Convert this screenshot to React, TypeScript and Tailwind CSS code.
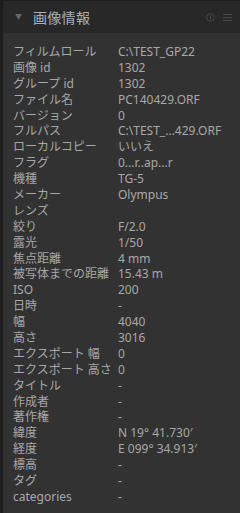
const rows: [string, string][] = [
  ["フィルムロール", "C:\\TEST_GP22"],
  ["画像 id", "1302"],
  ["グループ id", "1302"],
  ["ファイル名", "PC140429.ORF"],
  ["バージョン", "0"],
  ["フルパス", "C:\\TEST_...429.ORF"],
  ["ローカルコピー", "いいえ"],
  ["フラグ", "0...r..ap...r"],
  ["機種", "TG-5"],
  ["メーカー", "Olympus"],
  ["レンズ", ""],
  ["絞り", "F/2.0"],
  ["露光", "1/50"],
  ["焦点距離", "4 mm"],
  ["被写体までの距離", "15.43 m"],
  ["ISO", "200"],
  ["日時", "-"],
  ["幅", "4040"],
  ["高さ", "3016"],
  ["エクスポート 幅", "0"],
  ["エクスポート 高さ", "0"],
  ["タイトル", "-"],
  ["作成者", "-"],
  ["著作権", "-"],
  ["緯度", "N 19° 41.730′"],
  ["経度", "E 099° 34.913′"],
  ["標高", "-"],
  ["タグ", "-"],
  ["categories", "-"],
];

export default function App() {
  return (
    <div className="w-[240px] h-[513px] bg-[#1e1e1e] pl-[3px] overflow-hidden font-['Noto_Sans','Noto_Sans_CJK_JP',sans-serif]">
      <div className="h-full bg-[#323232] flex flex-col">
        {/* header */}
        <div className="h-[33px] bg-[#282828] border-t border-[#1c1c1c] flex items-center pl-[12px] pr-[8px]">
          <span className="text-[7px] text-[#6a6a6a] w-[18px]">▼</span>
          <span className="text-[14px] text-[#a9b0b8] tracking-[0.3px]">画像情報</span>
          <div className="ml-auto flex items-center gap-[8px] text-[#484848]">
            <svg width="9" height="9" viewBox="0 0 9 9" fill="none" stroke="currentColor" strokeWidth="1">
              <circle cx="4.5" cy="4.5" r="3.8" />
              <line x1="4.5" y1="2.5" x2="4.5" y2="6.5" />
            </svg>
            <svg width="9" height="8" viewBox="0 0 9 8" fill="none" stroke="currentColor" strokeWidth="1">
              <line x1="0" y1="1.5" x2="9" y2="1.5" />
              <line x1="0" y1="4.5" x2="9" y2="4.5" />
              <line x1="0" y1="7.5" x2="9" y2="7.5" />
            </svg>
          </div>
        </div>
        {/* rows */}
        <div className="pt-[11px] pl-[10px] text-[12px] leading-[15.9px] text-[#a8a8a8]">
          {rows.map(([k, v]) => (
            <div key={k} className="flex h-[15.9px] items-center">
              <span className="w-[105px] whitespace-nowrap">{k}</span>
              <span className="whitespace-nowrap">{v}</span>
            </div>
          ))}
        </div>
      </div>
    </div>
  );
}
